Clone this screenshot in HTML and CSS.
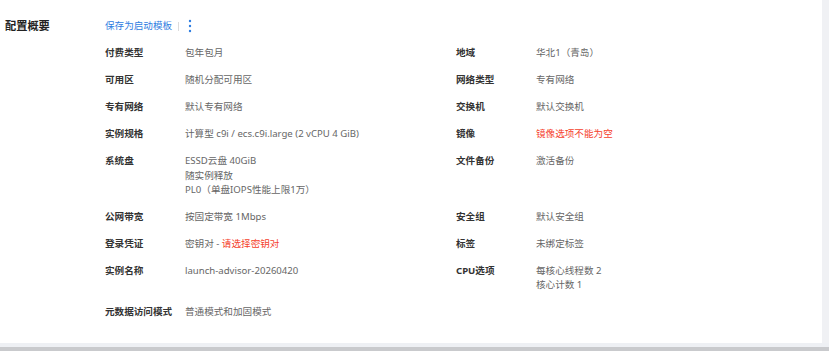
FILE: index.html
```html
<!DOCTYPE html>
<html>
<head>
 <meta charset="UTF-8">
 <title>配置概要</title>
 <link rel="stylesheet" href="styles.css">
</head>
<body>
<div class="page">
  <div class="summary">
    <div class="title">配置概要</div>
    <div class="body">
      <div class="actions">
        <a class="link" href="#">保存为启动模板</a>
        <span class="sep"></span>
        <svg class="more" width="4" height="14" viewBox="0 0 4 14"><circle cx="2" cy="2" r="1.2"/><circle cx="2" cy="7" r="1.2"/><circle cx="2" cy="12" r="1.2"/></svg>
      </div>
      <div class="grid">
        <div class="k">付费类型</div><div class="v">包年包月</div>
        <div class="k">地域</div><div class="v">华北1（青岛）</div>

        <div class="k">可用区</div><div class="v">随机分配可用区</div>
        <div class="k">网络类型</div><div class="v">专有网络</div>

        <div class="k">专有网络</div><div class="v">默认专有网络</div>
        <div class="k">交换机</div><div class="v">默认交换机</div>

        <div class="k">实例规格</div><div class="v">计算型 c9i / ecs.c9i.large (2 vCPU 4 GiB)</div>
        <div class="k">镜像</div><div class="v err">镜像选项不能为空</div>

        <div class="k">系统盘</div><div class="v">ESSD云盘 40GiB<br>随实例释放<br>PL0（单盘IOPS性能上限1万）</div>
        <div class="k">文件备份</div><div class="v">激活备份</div>

        <div class="k">公网带宽</div><div class="v">按固定带宽 1Mbps</div>
        <div class="k">安全组</div><div class="v">默认安全组</div>

        <div class="k">登录凭证</div><div class="v">密钥对 - <span class="err">请选择密钥对</span></div>
        <div class="k">标签</div><div class="v">未绑定标签</div>

        <div class="k">实例名称</div><div class="v">launch-advisor-20260420</div>
        <div class="k">CPU选项</div><div class="v">每核心线程数 2<br>核心计数 1</div>

        <div class="k">元数据访问模式</div><div class="v">普通模式和加固模式</div>
      </div>
    </div>
  </div>
</div>
<div class="foot"></div>
</body>
</html>
```

FILE: styles.css
```css
body { margin: 0; background: #f0f1f4; font-family: "Noto Sans", "Noto Sans CJK SC", sans-serif;
  font-size: 9.6px; line-height: 14.5px; color: #555; width: 829px; height: 351px; overflow: hidden; }
.page { background: #fff; width: 822px; height: 343px; box-sizing: border-box; padding-top: 18.8px; }
.summary { display: flex; }
.title { width: 100px; padding-left: 5px; font-size: 11.2px; font-weight: bold; color: #222; }
.body { flex: 1; }
.actions { display: flex; align-items: center; height: 14.5px; }
.link { color: #2f7de1; text-decoration: none; }
.sep { width: 1px; height: 9px; background: #dcdcdc; margin: 0 6px; }
.more { fill: #2f7de1; margin-left: 3px; }
.grid { display: grid; grid-template-columns: 80px 271px 80px 1fr; row-gap: 12.4px;
  margin-top: 13.2px; }
.k { font-weight: bold; color: #333; }
.v { color: #666; }
.err { color: #f5412c; }
.foot { height: 8px; border-top: 4px solid #eef0f4; box-sizing: border-box; background: #c9cacd; }
```
